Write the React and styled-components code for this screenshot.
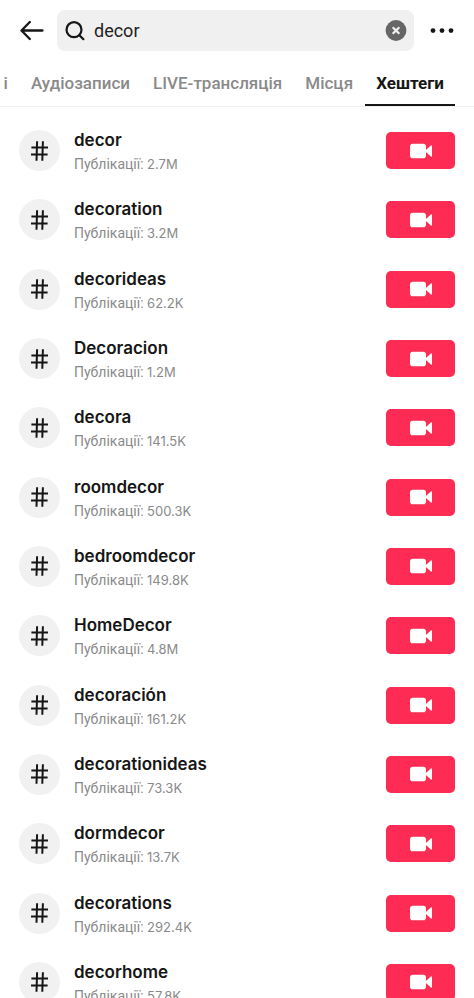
import React, { useState } from "react";
import styled, { createGlobalStyle } from "styled-components";

const GlobalStyle = createGlobalStyle`
  * {
    box-sizing: border-box;
  }

  html {
    scrollbar-width: none;
  }

  body {
    margin: 0;
    background: #fff;
    color: #161616;
    font-family: Roboto, "Liberation Sans", sans-serif;
  }

  button {
    border: 0;
    padding: 0;
    background: none;
    color: inherit;
    font: inherit;
    cursor: pointer;
  }
`;

const Page = styled.div`
  overflow: hidden;
`;

/// top bar with the search field
const TopBar = styled.header`
  display: flex;
  align-items: center;
  padding: 10px 20px 0;
`;

const IconButton = styled.button`
  display: flex;
  flex: none;
`;

const SearchBox = styled.label`
  display: flex;
  flex: 1;
  align-items: center;
  min-width: 0;
  height: 41px;
  margin: 0 16px 0 13px;
  padding: 0 7px 0 8px;
  border-radius: 8px;
  background: #f0f0f0;
`;

const SearchInput = styled.input`
  flex: 1;
  min-width: 0;
  margin-left: 9px;
  padding: 0;
  border: 0;
  outline: 0;
  background: none;
  color: #222;
  font-family: Roboto, "Liberation Sans", sans-serif;
  font-size: 18px;
`;

/// tabs
const Tabs = styled.nav`
  display: flex;
  justify-content: flex-end;
  gap: 1px;
  height: 56px;
  padding: 0 19px;
  border-bottom: 1px solid #f0f0f0;
`;

const Tab = styled.button`
  flex: none;
  height: 55px;
  padding: 10px 11px 0;
  border-bottom: 2px solid ${(props) => (props.$active ? "#161616" : "transparent")};
  color: ${(props) => (props.$active ? "#161616" : "#8a8a8a")};
  font-size: 17px;
  font-weight: ${(props) => (props.$active ? 700 : 500)};
  white-space: nowrap;
`;

/// list of hashtags
const List = styled.ul`
  display: grid;
  grid-auto-rows: 1fr;
  min-height: 910px;
  margin: 0;
  padding: 9px 19px 0;
  list-style: none;
`;

const Row = styled.li`
  display: flex;
  align-items: center;
`;

const HashCircle = styled.span`
  display: flex;
  flex: none;
  align-items: center;
  justify-content: center;
  width: 41px;
  height: 41px;
  border-radius: 50%;
  background: #f1f1f1;
`;

const Info = styled.div`
  flex: 1;
  min-width: 0;
  margin-left: 14px;
  padding-top: 3px;
`;

const Name = styled.div`
  font-family: Inter, Roboto, sans-serif;
  font-size: 17px;
  font-weight: 600;
  line-height: 24px;
`;

const Count = styled.div`
  color: #8a8a8a;
  font-size: 14px;
  line-height: 24px;
`;

const Amount = styled.span`
  font-family: Inter, Roboto, sans-serif;
  font-size: 13px;
`;

const RecordButton = styled.button`
  display: flex;
  flex: none;
  align-items: center;
  justify-content: center;
  width: 69px;
  height: 37px;
  border-radius: 5px;
  background: #fe2c55;
`;

const tabs = ["і", "Аудіозаписи", "LIVE-трансляція", "Місця", "Хештеги"];

const hashtags = [
  { name: "decor", count: "2.7M" },
  { name: "decoration", count: "3.2M" },
  { name: "decorideas", count: "62.2K" },
  { name: "Decoracion", count: "1.2M" },
  { name: "decora", count: "141.5K" },
  { name: "roomdecor", count: "500.3K" },
  { name: "bedroomdecor", count: "149.8K" },
  { name: "HomeDecor", count: "4.8M" },
  { name: "decoración", count: "161.2K" },
  { name: "decorationideas", count: "73.3K" },
  { name: "dormdecor", count: "13.7K" },
  { name: "decorations", count: "292.4K" },
  { name: "decorhome", count: "57.8K" },
];

const BackIcon = () => (
  <svg width="24" height="22" viewBox="0 0 24 22" fill="none" stroke="#161616" strokeWidth="2.3" strokeLinecap="round" strokeLinejoin="round">
    <path d="M22.5 10.5H2M9.8 2L1.5 10.5L9.8 19" />
  </svg>
);

const SearchIcon = () => (
  <svg width="20" height="20" viewBox="0 0 20 20" fill="none" stroke="#161616" strokeWidth="2.2" strokeLinecap="round">
    <circle cx="9" cy="8.7" r="7.5" />
    <path d="M14.4 14.2L18.4 18.2" />
  </svg>
);

const ClearIcon = () => (
  <svg width="22" height="22" viewBox="0 0 22 22">
    <circle cx="11" cy="10.5" r="10.4" fill="#666" />
    <path d="M7.7 7.2L14.3 13.8M14.3 7.2L7.7 13.8" stroke="#f0f0f0" strokeWidth="2.2" />
  </svg>
);

const MoreIcon = () => (
  <svg width="24" height="6" viewBox="0 0 24 6" fill="#161616">
    <circle cx="3" cy="2.6" r="2.4" />
    <circle cx="12" cy="2.6" r="2.4" />
    <circle cx="21" cy="2.6" r="2.4" />
  </svg>
);

const HashIcon = () => (
  <svg width="18" height="20" viewBox="0 0 18 20" fill="none" stroke="#161616" strokeWidth="2">
    <path d="M6.1 0.2L5.5 19.8M11.9 0.2L11.3 19.8M0.4 6.4H17M0 13.4H16.6" />
  </svg>
);

const CameraIcon = () => (
  <svg width="22" height="16" viewBox="0 0 22 16" fill="#fff">
    <rect x="0" y="0.8" width="16" height="14.4" rx="2.8" />
    <path d="M15.6 7.3L20.9 2.6Q22 1.8 22 3.2V12.8Q22 14.2 20.9 13.4L15.6 8.7Z" />
  </svg>
);

const App = () => {
  const [query, setQuery] = useState("decor");
  const [activeTab, setActiveTab] = useState("Хештеги");

  return (
    <Page>
      <GlobalStyle />
      <TopBar>
        <IconButton type="button" aria-label="Назад">
          <BackIcon />
        </IconButton>
        <SearchBox>
          <SearchIcon />
          <SearchInput
            type="text"
            aria-label="Пошук"
            value={query}
            onChange={(event) => setQuery(event.target.value)}
          />
          <IconButton type="button" aria-label="Очистити" onClick={() => setQuery("")}>
            <ClearIcon />
          </IconButton>
        </SearchBox>
        <IconButton type="button" aria-label="Більше">
          <MoreIcon />
        </IconButton>
      </TopBar>

      <Tabs>
        {tabs.map((tab) => (
          <Tab key={tab} type="button" $active={tab === activeTab} onClick={() => setActiveTab(tab)}>
            {tab}
          </Tab>
        ))}
      </Tabs>

      <List>
        {hashtags.map(({ name, count }) => (
          <Row key={name}>
            <HashCircle>
              <HashIcon />
            </HashCircle>
            <Info>
              <Name>{name}</Name>
              <Count>
                Публікації: <Amount>{count}</Amount>
              </Count>
            </Info>
            <RecordButton type="button" aria-label={`Зняти відео ${name}`}>
              <CameraIcon />
            </RecordButton>
          </Row>
        ))}
      </List>
    </Page>
  );
};

export default App;
